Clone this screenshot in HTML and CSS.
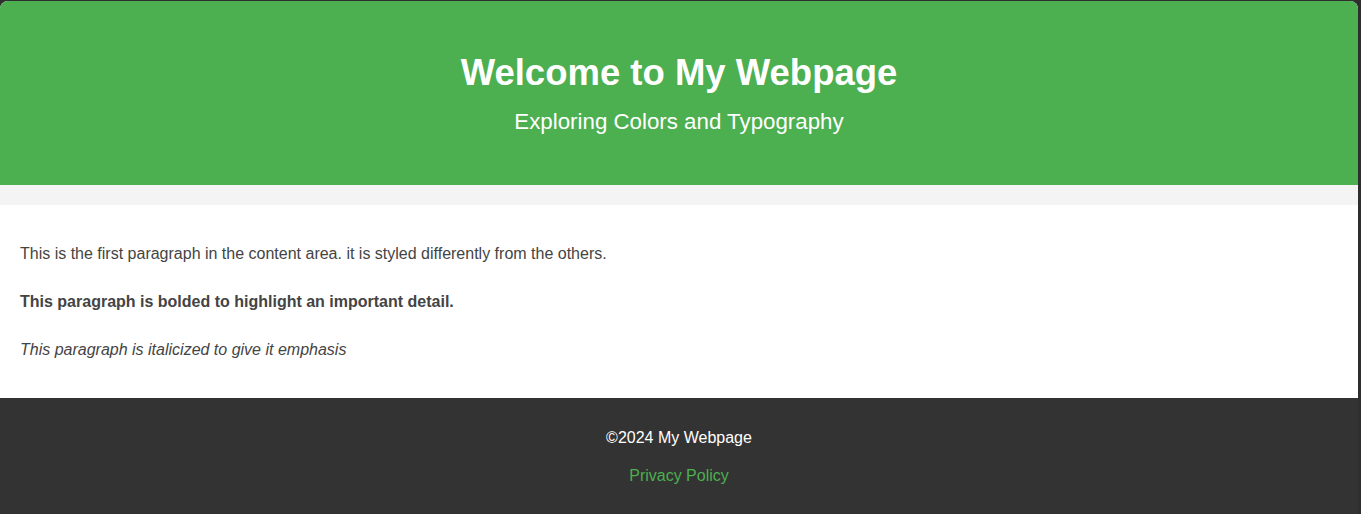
FILE: index.html
```html
<!DOCTYPE html>
<html lang="en">
<head>
<meta charset="utf-8">
<title>Welcome to My Webpage</title>
<link rel="stylesheet" href="styles.css">
</head>
<body>
<div class="page">
  <header class="site-header">
    <h1 class="title">Welcome to My Webpage</h1>
    <p class="subtitle">Exploring Colors and Typography</p>
  </header>
  <main class="content">
    <p class="para">This is the first paragraph in the content area. it is styled differently from the others.</p>
    <p class="para para-bold">This paragraph is bolded to highlight an important detail.</p>
    <p class="para para-italic">This paragraph is italicized to give it emphasis</p>
  </main>
  <footer class="site-footer">
    <p class="copy">©2024 My Webpage</p>
    <p class="copy"><a class="footer-link" href="#">Privacy Policy</a></p>
  </footer>
</div>
</body>
</html>
```
FILE: styles.css
```css
html, body {
  margin: 0;
  padding: 0;
  height: 100%;
}
body {
  background: #2e2e2e;
  font-family: "Liberation Sans", Arial, sans-serif;
  overflow: hidden;
}
.page {
  margin: 1px 3px 0 0;
  background: #f4f4f4;
  border-radius: 8px 8px 0 0;
  overflow: hidden;
  min-height: calc(100% - 1px);
  display: flex;
  flex-direction: column;
}
.site-header {
  background: #4caf50;
  color: #fff;
  text-align: center;
  padding: 50px 20px 48px;
}
.title {
  margin: 0;
  font-size: 36.5px;
  line-height: 44px;
  font-weight: bold;
}
.subtitle {
  margin: 12px 0 0;
  font-size: 22.3px;
  line-height: 30px;
}
.content {
  background: #fff;
  margin-top: 20px;
  padding: 35px 20px 14px;
  color: #444;
}
.para {
  margin: 0 0 20px;
  font-size: 16px;
  line-height: 28px;
}
.para-bold {
  font-weight: bold;
}
.para-italic {
  font-style: italic;
}
.site-footer {
  background: #333;
  color: #fff;
  text-align: center;
  padding: 31px 20px 29px;
  flex: 1;
}
.copy {
  margin: 0 0 20px;
  font-size: 16px;
  line-height: 18px;
}
.footer-link {
  color: #4caf50;
  text-decoration: none;
}
```
